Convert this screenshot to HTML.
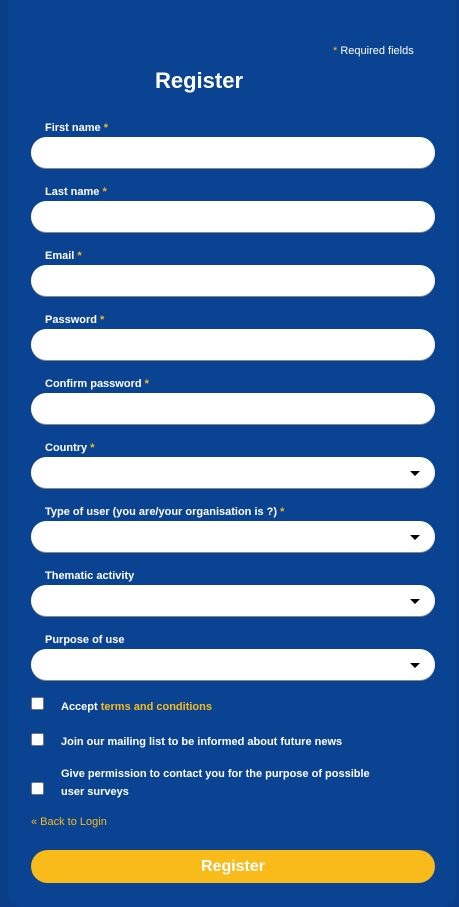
<!DOCTYPE html>
<html><head><meta charset="utf-8"><style>
*{box-sizing:border-box;margin:0;padding:0}
body{width:459px;height:907px;background:#093d88;font-family:"Liberation Sans",sans-serif;position:relative;overflow:hidden;color:#fff}
.panel{position:absolute;left:8px;top:0;width:448px;height:907px;background:#0b4393;border-radius:0 0 14px 14px}
.abs{position:absolute}
.req{left:333px;top:45px;font-size:11px}
.y{color:#f8bb1a}
h1{position:absolute;left:0;width:398px;text-align:center;top:68px;font-size:22px;font-weight:bold}
.lab{position:absolute;left:45px;font-size:11px;font-weight:bold}
.inp{position:absolute;left:31px;width:404px;height:31px;background:#fff;border-radius:16px;box-shadow:0 1px 0 #888}
.arr{position:absolute;right:15px;top:14px;width:0;height:0;border-left:5px solid transparent;border-right:5px solid transparent;border-top:5px solid #000}
.cb{position:absolute;left:31px;width:13px;height:13px;background:#fff;border:1px solid #777;border-radius:2px}
.ct{position:absolute;left:61px;font-size:11px;font-weight:bold;line-height:18px}
.back{left:31px;top:816px;font-size:11px;color:#f8bb1a}
.btn{position:absolute;left:31px;top:850px;width:404px;height:33px;background:#f8bb1a;border-radius:17px;text-align:center;font-size:16px;font-weight:bold;line-height:33px}
</style></head><body>
<div class="panel"></div>
<div class="abs req"><span class="y">*</span> Required fields</div>
<h1>Register</h1>

<div class="lab" style="top:122px">First name <span class="y">*</span></div><div class="inp" style="top:137px"></div>
<div class="lab" style="top:186px">Last name <span class="y">*</span></div><div class="inp" style="top:201px"></div>
<div class="lab" style="top:250px">Email <span class="y">*</span></div><div class="inp" style="top:265px"></div>
<div class="lab" style="top:314px">Password <span class="y">*</span></div><div class="inp" style="top:329px"></div>
<div class="lab" style="top:378px">Confirm password <span class="y">*</span></div><div class="inp" style="top:393px"></div>
<div class="lab" style="top:442px">Country <span class="y">*</span></div><div class="inp" style="top:457px"><div class="arr"></div></div>
<div class="lab" style="top:506px">Type of user (you are/your organisation is ?) <span class="y">*</span></div><div class="inp" style="top:521px"><div class="arr"></div></div>
<div class="lab" style="top:570px">Thematic activity</div><div class="inp" style="top:585px"><div class="arr"></div></div>
<div class="lab" style="top:634px">Purpose of use</div><div class="inp" style="top:649px"><div class="arr"></div></div>

<div class="cb" style="top:697px"></div><div class="ct" style="top:698px">Accept <span class="y">terms and conditions</span></div>
<div class="cb" style="top:733px"></div><div class="ct" style="top:733px">Join our mailing list to be informed about future news</div>
<div class="cb" style="top:782px"></div><div class="ct" style="top:765px">Give permission to contact you for the purpose of possible<br>user surveys</div>
<div class="abs back">« Back to Login</div>
<div class="btn">Register</div>
</body></html>
